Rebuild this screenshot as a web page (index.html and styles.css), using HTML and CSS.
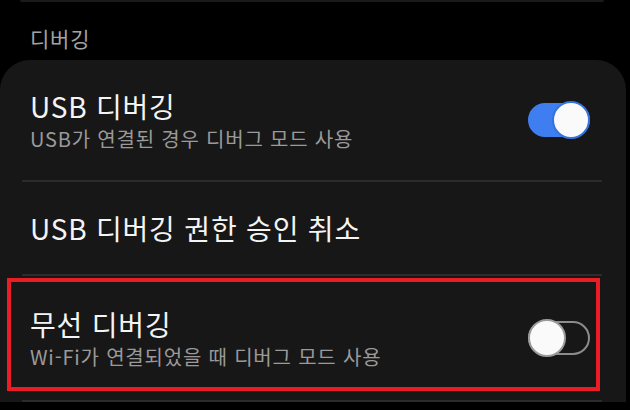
FILE: index.html
```html
<!DOCTYPE html>
<html lang="ko">
<head>
    <meta charset="UTF-8">
    <meta name="viewport" content="width=device-width, initial-scale=1.0">
    <title>개발자 옵션</title>
    <link rel="stylesheet" href="styles.css">
</head>
<body>
    <div class="prev-card"></div>

    <div class="section-title">디버깅</div>

    <div class="card">
        <div class="row row-tall">
            <div class="text">
                <div class="title">USB 디버깅</div>
                <div class="summary">USB가 연결된 경우 디버그 모드 사용</div>
            </div>
            <div class="switch on"><span class="knob"></span></div>
        </div>

        <div class="divider"></div>

        <div class="row row-short">
            <div class="text">
                <div class="title">USB 디버깅 권한 승인 취소</div>
            </div>
        </div>

        <div class="divider"></div>

        <div class="row row-tall marked">
            <div class="text">
                <div class="title">무선 디버깅</div>
                <div class="summary">Wi-Fi가 연결되었을 때 디버그 모드 사용</div>
            </div>
            <div class="switch"><span class="knob"></span></div>
            <div class="highlight"></div> <!-- 빨간 강조 박스 -->
        </div>

        <div class="divider"></div>
    </div>
</body>
</html>
```

FILE: styles.css
```css
body {
    margin: 0;
    background-color: #000;
    font-family: "Noto Sans CJK KR", "Noto Sans", sans-serif;
    width: 630px;
    height: 410px;
    overflow: hidden;
}

.prev-card {
    height: 2px;
    margin: 0 26px 0 20px;
    background-color: #1b1b1b;
    border-radius: 0 0 2px 2px;
}

.section-title {
    height: 44px;
    padding: 14px 0 0 30px;
    display: flex;
    align-items: center;
    color: #a3a3a3;
    font-size: 21px;
    letter-spacing: 0.8px;
}

.card {
    margin-right: 4px;
    padding: 0 24px 0 22px;
    background-color: #171717;
    border-radius: 30px 30px 0 0;
}

.row {
    display: flex;
    align-items: center;
    justify-content: space-between;
    padding: 0 12px 0 8px;
}

.row-tall {
    height: 120px;
}

.row-short {
    height: 92px;
}

.marked {
    position: relative;
    height: 124px;
}

.title {
    color: #f4f4f4;
    font-size: 28px;
    line-height: 34px;
    letter-spacing: 0.8px;
}

.summary {
    margin-top: 3px;
    color: #9a9a9a;
    font-size: 20px;
    line-height: 26px;
    letter-spacing: 0.8px;
}

.divider {
    height: 2px;
    background-color: #2c2c2c;
}

.switch {
    width: 58px;
    height: 30px;
    border: 2px solid #8c8c8c;
    border-radius: 17px;
    display: flex;
    align-items: center;
    flex-shrink: 0;
}

.switch.on {
    background-color: #3e7ef0;
    border-color: #3e7ef0;
    justify-content: flex-end;
}

.knob {
    width: 34px;
    height: 34px;
    margin: 0 -2px;
    border: 2px solid #9a9a9a;
    border-radius: 50%;
    background-color: #fafafa;
    flex-shrink: 0;
}

.switch.on .knob {
    border-color: #3573e0;
}

.highlight {
    position: absolute;
    left: -15px;
    right: 2px;
    top: 2px;
    bottom: 9px;
    border: 4px solid #ea1c24;
}
```
